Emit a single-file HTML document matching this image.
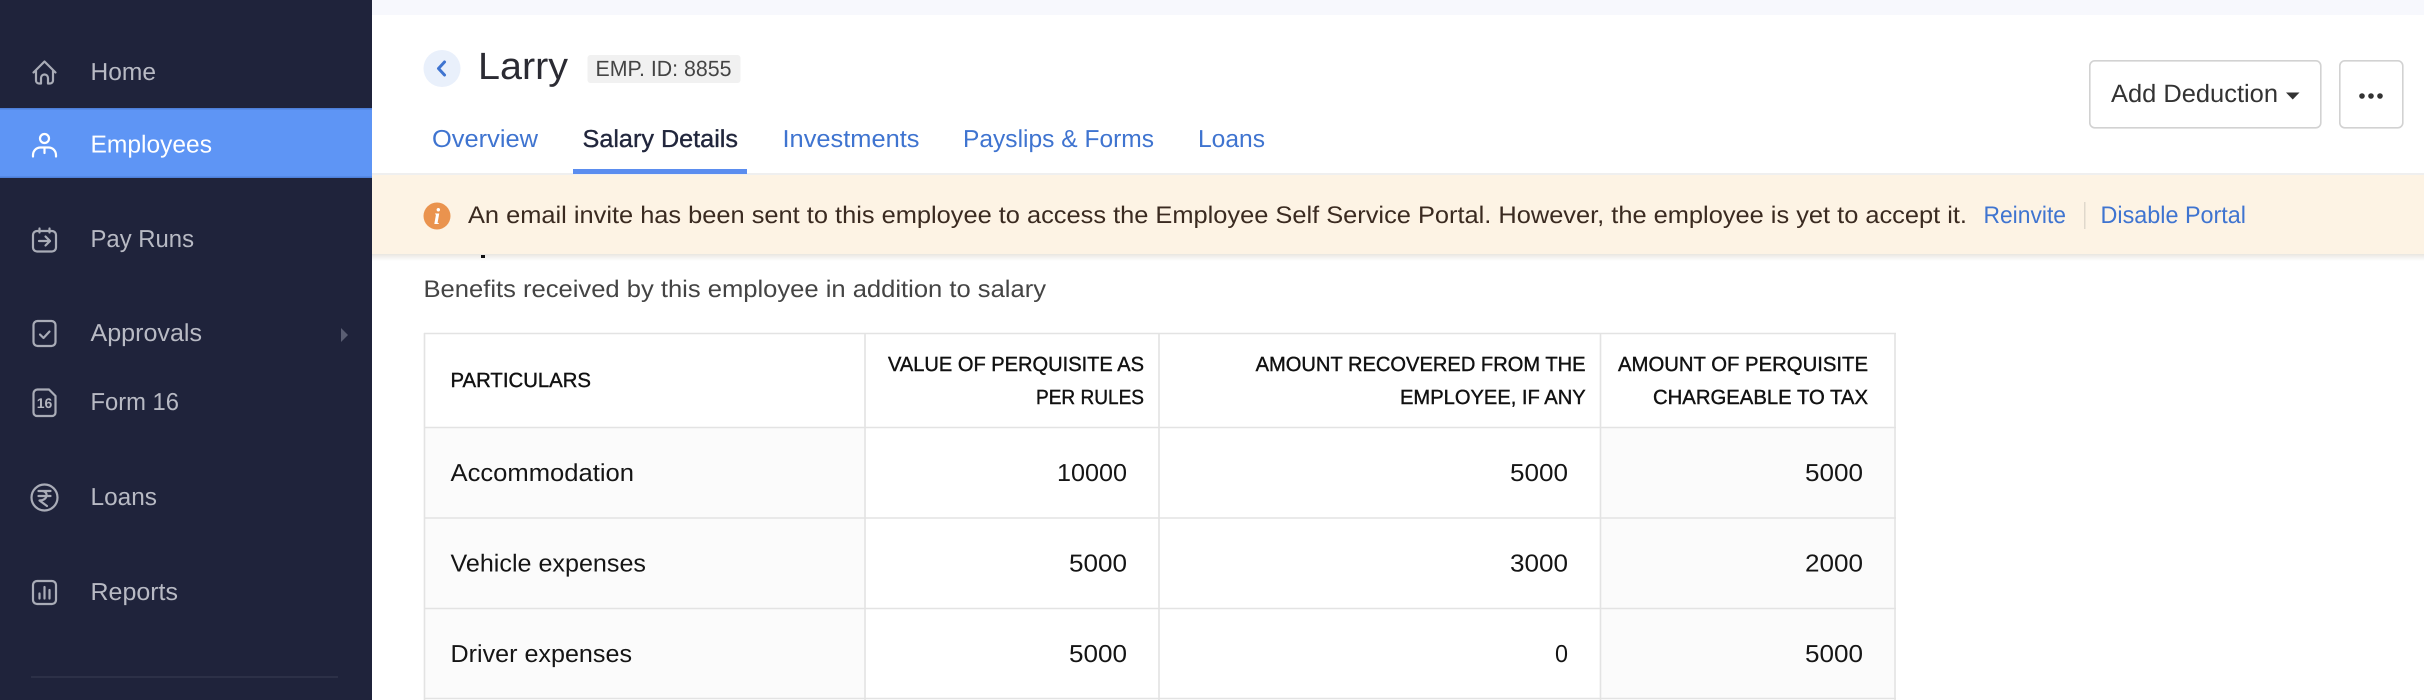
<!DOCTYPE html>
<html lang="en">
<head>
<meta charset="utf-8">
<title>Larry - Salary Details</title>
<style>
html,body{margin:0;padding:0;width:2424px;height:700px;overflow:hidden;background:#fff}
svg{display:block;position:absolute;left:0;top:0}
text{font-family:"Liberation Sans",sans-serif;text-rendering:geometricPrecision}
.nav{font-size:24.5px;fill:#b8bac4}
.tab{font-size:24.5px;fill:#3f74d0}
.b{font-size:24px;fill:#3a2a20}
.lnk{font-size:24px;fill:#3f74d0}
.h{font-size:20.5px;fill:#111;stroke:#111;stroke-width:.4px}
.c{font-size:24.5px;fill:#151515}
.ic{fill:none;stroke:#a9acb7;stroke-width:2.2;stroke-linecap:round;stroke-linejoin:round}
</style>
</head>
<body>
<svg width="2424" height="700" viewBox="0 0 2424 700" xmlns="http://www.w3.org/2000/svg">
<defs>
<linearGradient id="sh" x1="0" y1="0" x2="0" y2="1"><stop offset="0" stop-color="#e9e6e0"/><stop offset="1" stop-color="#ffffff"/></linearGradient>
</defs>
<rect width="2424" height="700" fill="#fff"/>
<rect x="372" width="2052" height="15" fill="#f7f8fd"/>

<!-- Page header -->
<circle cx="442" cy="68.500" r="18.500" fill="#e9f0fb"/>
<path d="M444.500 62 L438.500 68.500 L444.500 75" fill="none" stroke="#3f74d0" stroke-width="3" stroke-linecap="round" stroke-linejoin="round"/>
<text x="478" y="79" font-size="38" fill="#2b2b33" textLength="90" lengthAdjust="spacingAndGlyphs">Larry</text>
<rect x="587.500" y="55" width="153" height="28" rx="3" fill="#f1f1f1"/>
<text x="595.500" y="76" font-size="22" fill="#444" textLength="136" lengthAdjust="spacingAndGlyphs">EMP. ID: 8855</text>

<text class="tab" x="432" y="147" textLength="106" lengthAdjust="spacingAndGlyphs">Overview</text>
<text x="582.500" y="147" font-size="24.500" fill="#21263c" stroke="#21263c" stroke-width=".35" textLength="155.500" lengthAdjust="spacingAndGlyphs">Salary Details</text>
<text class="tab" x="782.500" y="147" textLength="137" lengthAdjust="spacingAndGlyphs">Investments</text>
<text class="tab" x="963" y="147" textLength="191" lengthAdjust="spacingAndGlyphs">Payslips &amp; Forms</text>
<text class="tab" x="1198" y="147" textLength="67" lengthAdjust="spacingAndGlyphs">Loans</text>

<!-- Buttons -->
<rect x="2089.800" y="60.800" width="231" height="67" rx="5" fill="#fff" stroke="#d2d2d2" stroke-width="1.600"/>
<text x="2111" y="102" font-size="25" fill="#333" textLength="167" lengthAdjust="spacingAndGlyphs">Add Deduction</text>
<path d="M2286 92.500 H2299.500 L2292.750 99.500 Z" fill="#333"/>
<rect x="2339.800" y="60.800" width="63" height="67" rx="5" fill="#fff" stroke="#d2d2d2" stroke-width="1.600"/>
<circle cx="2362" cy="96" r="2.800" fill="#333"/><circle cx="2371" cy="96" r="2.800" fill="#333"/><circle cx="2380" cy="96" r="2.800" fill="#333"/>

<!-- Content under banner -->
<rect x="372" y="254" width="2052" height="7" fill="url(#sh)"/>
<rect x="481" y="255" width="4" height="3" fill="#111"/>
<text x="423.500" y="297" font-size="24" fill="#444" textLength="622.500" lengthAdjust="spacingAndGlyphs">Benefits received by this employee in addition to salary</text>

<!-- Banner -->
<rect x="372" y="173" width="2052" height="2" fill="#efefef"/>
<rect x="573" y="169" width="174" height="5" fill="#5b8def"/>
<rect x="372" y="175" width="2052" height="79" fill="#fdf3e4"/>
<circle cx="437" cy="216" r="13.500" fill="#ea934e"/>
<text x="437" y="224" font-size="23" font-weight="bold" font-style="italic" text-anchor="middle" fill="#fff" style="font-family:'Liberation Serif',serif">i</text>
<text class="b" x="468" y="223" textLength="1499" lengthAdjust="spacingAndGlyphs">An email invite has been sent to this employee to access the Employee Self Service Portal. However, the employee is yet to accept it.</text>
<text class="lnk" x="1983.500" y="223" textLength="82.500" lengthAdjust="spacingAndGlyphs">Reinvite</text>
<rect x="2084" y="202" width="1.500" height="27" fill="#e0d8cc"/>
<text class="lnk" x="2100.500" y="223" textLength="145.500" lengthAdjust="spacingAndGlyphs">Disable Portal</text>

<!-- Table -->
<rect x="425" y="428" width="440" height="270" fill="#fbfbfb"/>
<rect x="1601" y="428" width="294" height="270" fill="#fbfbfb"/>
<g stroke="#e3e3e3" stroke-width="1.600" fill="none">
<path d="M424 333.500 H1896 M424 427.500 H1896 M424 518 H1896 M424 608.500 H1896 M424 698.500 H1896"/>
<path d="M424.500 333 V700 M865 333 V700 M1159 333 V700 M1600.500 333 V700 M1895 333 V700"/>
</g>
<text class="h" x="450.500" y="387" textLength="140.500" lengthAdjust="spacingAndGlyphs">PARTICULARS</text>
<text class="h" x="888" y="371" textLength="256" lengthAdjust="spacingAndGlyphs">VALUE OF PERQUISITE AS</text>
<text class="h" x="1036" y="404" textLength="108" lengthAdjust="spacingAndGlyphs">PER RULES</text>
<text class="h" x="1255.600" y="371" textLength="330" lengthAdjust="spacingAndGlyphs">AMOUNT RECOVERED FROM THE</text>
<text class="h" x="1400" y="404" textLength="185.700" lengthAdjust="spacingAndGlyphs">EMPLOYEE, IF ANY</text>
<text class="h" x="1618" y="371" textLength="250" lengthAdjust="spacingAndGlyphs">AMOUNT OF PERQUISITE</text>
<text class="h" x="1653" y="404" textLength="215" lengthAdjust="spacingAndGlyphs">CHARGEABLE TO TAX</text>

<text class="c" x="450.500" y="481" textLength="183.500" lengthAdjust="spacingAndGlyphs">Accommodation</text>
<text class="c" x="1057" y="481" textLength="70" lengthAdjust="spacingAndGlyphs">10000</text>
<text class="c" x="1510" y="481" textLength="58" lengthAdjust="spacingAndGlyphs">5000</text>
<text class="c" x="1805" y="481" textLength="58" lengthAdjust="spacingAndGlyphs">5000</text>

<text class="c" x="450.500" y="571.500" textLength="195.500" lengthAdjust="spacingAndGlyphs">Vehicle expenses</text>
<text class="c" x="1069" y="571.500" textLength="58" lengthAdjust="spacingAndGlyphs">5000</text>
<text class="c" x="1510" y="571.500" textLength="58" lengthAdjust="spacingAndGlyphs">3000</text>
<text class="c" x="1805" y="571.500" textLength="58" lengthAdjust="spacingAndGlyphs">2000</text>

<text class="c" x="450.500" y="662" textLength="181.500" lengthAdjust="spacingAndGlyphs">Driver expenses</text>
<text class="c" x="1069" y="662" textLength="58" lengthAdjust="spacingAndGlyphs">5000</text>
<text class="c" x="1555" y="662" textLength="13" lengthAdjust="spacingAndGlyphs">0</text>
<text class="c" x="1805" y="662" textLength="58" lengthAdjust="spacingAndGlyphs">5000</text>

<!-- Sidebar -->
<rect width="372" height="700" fill="#1f233b"/>
<rect y="108" width="372" height="70" fill="#5e95f5"/>
<rect y="108" width="372" height="1.500" fill="#4d7fd8"/>
<rect y="176.500" width="372" height="1.500" fill="#4d7fd8"/>
<rect x="31" y="676" width="307" height="2" fill="#2c3047"/>

<text class="nav" x="90.500" y="80" textLength="65.500" lengthAdjust="spacingAndGlyphs">Home</text>
<text x="90.500" y="152.500" font-size="24.500" fill="#fff" textLength="121.500" lengthAdjust="spacingAndGlyphs">Employees</text>
<text class="nav" x="90.500" y="247" textLength="103.500" lengthAdjust="spacingAndGlyphs">Pay Runs</text>
<text class="nav" x="90.500" y="341" textLength="111.500" lengthAdjust="spacingAndGlyphs">Approvals</text>
<text class="nav" x="90.500" y="410" textLength="88.500" lengthAdjust="spacingAndGlyphs">Form 16</text>
<text class="nav" x="90.500" y="505" textLength="66.500" lengthAdjust="spacingAndGlyphs">Loans</text>
<text class="nav" x="90.500" y="600" textLength="87.500" lengthAdjust="spacingAndGlyphs">Reports</text>

<path d="M341 328 L348 335 L341 342 Z" fill="#5a5e73"/>

<!-- Home -->
<path class="ic" d="M33.500 72.500 L44.500 61.500 L55.500 72.500 M36 70.500 V80.500 a3 3 0 0 0 3 3 H41 V78 a3.500 3.500 0 0 1 7 0 V83.500 H50 a3 3 0 0 0 3 -3 V70.500"/>
<!-- Employees -->
<g fill="none" stroke="#fff" stroke-width="2.200" stroke-linecap="round" stroke-linejoin="round">
<circle cx="44.500" cy="138.500" r="4.500"/>
<path d="M33 156.500 V155 a7.500 7.500 0 0 1 7.500 -7.500 H48.500 a7.500 7.500 0 0 1 7.500 7.500 V156.500 M44.500 147.500 V153"/>
</g>
<!-- Pay Runs -->
<g class="ic">
<rect x="33" y="231" width="23" height="20.500" rx="4"/>
<path d="M39.500 228.500 V232.500 M49.500 228.500 V232.500 M39 241 H50 M45.500 236.500 L50 241 L45.500 245.500"/>
</g>
<!-- Approvals -->
<g class="ic">
<rect x="33.500" y="321" width="22" height="25" rx="4"/>
<path d="M40 334.500 L43.500 338 L49.500 331.500"/>
</g>
<!-- Form 16 -->
<path class="ic" d="M37.500 389.500 H49 L55.500 396 V412.500 a3.500 3.500 0 0 1 -3.500 3.500 H37 a3.500 3.500 0 0 1 -3.500 -3.500 V393.500 a4 4 0 0 1 4 -4 Z"/>
<text x="44.500" y="408" font-size="14" font-weight="bold" text-anchor="middle" fill="#b4b6c0">16</text>
<!-- Loans -->
<circle class="ic" cx="44.500" cy="497.500" r="13"/>
<path class="ic" d="M38.500 491 H50.500 M38.500 496 H50.500 M42 491 C48.500 491 48.500 500.500 39.500 500.500 L47 506"/>
<!-- Reports -->
<g class="ic">
<rect x="33" y="581" width="23" height="23" rx="4"/>
<path d="M39.500 598.500 V593.500 M44.500 598.500 V587 M49.500 598.500 V590"/>
</g>
</svg>
</body>
</html>
